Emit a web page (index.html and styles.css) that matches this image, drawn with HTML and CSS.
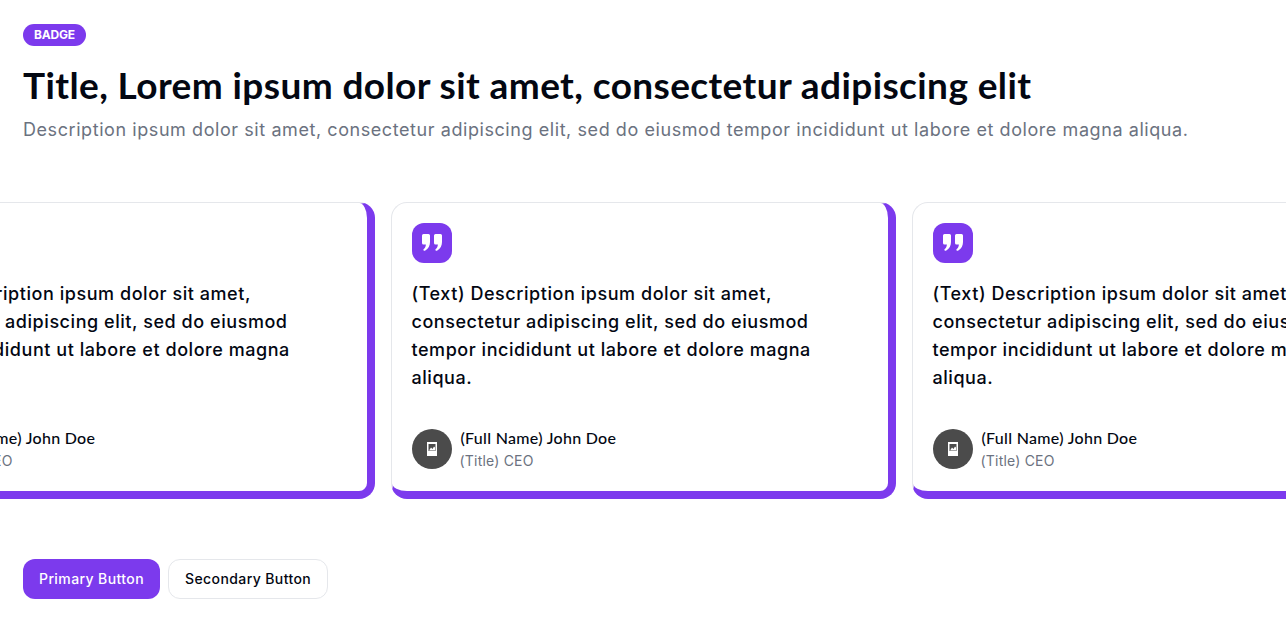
FILE: index.html
```html
<!DOCTYPE html>
<html lang="en">
<head>
  <meta charset="UTF-8" />
  <meta name="viewport" content="width=device-width, initial-scale=1.0" />
  <title>Testimonials</title>
  <link rel="stylesheet" href="styles.css">
</head>
<body>

  <div class="header">
    <span class="badge">BADGE</span>
    <h1 class="title">Title, Lorem ipsum dolor sit amet, consectetur adipiscing elit</h1>
    <p class="description">Description ipsum dolor sit amet, consectetur adipiscing elit, sed do eiusmod tempor incididunt ut labore et dolore magna aliqua.</p>
  </div>

  <div class="cards">
    <div class="card">
      <div class="quote-icon">
        <svg width="20" height="18" viewBox="0 0 20 18"><path d="M1.500 0h5A1.500 1.500 0 0 1 8 1.500V8c0 3.500-1.500 6.800-5 8.700-.6.300-1.200.1-1.500-.4s-.1-1 .3-1.300C3 14 3.700 12.500 3.900 10.500H1.500A1.500 1.500 0 0 1 0 9V1.500A1.500 1.500 0 0 1 1.500 0z" fill="#fff"/><path d="M1.500 0h5A1.500 1.500 0 0 1 8 1.500V8c0 3.500-1.500 6.800-5 8.700-.6.300-1.200.1-1.500-.4s-.1-1 .3-1.300C3 14 3.700 12.500 3.900 10.500H1.500A1.500 1.500 0 0 1 0 9V1.500A1.500 1.500 0 0 1 1.500 0z" transform="translate(12 0)" fill="#fff"/></svg>
      </div>
      <p class="card-text">(Text) Description ipsum dolor sit amet, consectetur adipiscing elit, sed do eiusmod tempor incididunt ut labore et dolore magna aliqua.</p>
      <div class="person">
        <div class="avatar">
          <svg width="10" height="14" viewBox="0 0 10 14"><path d="M0 0h10v14H0z" fill="#fff"/><path d="M1.500 2h7v7h-7z" fill="#4b4b4b"/><path d="M2 8.500l2-3 1.500 1.500L7 4.500l1 1v3z" fill="#fff"/></svg>
        </div>
        <div>
          <div class="person-name">(Full Name) John Doe</div>
          <div class="person-title">(Title) CEO</div>
        </div>
      </div>
    </div>

    <div class="card">
      <div class="quote-icon">
        <svg width="20" height="18" viewBox="0 0 20 18"><path d="M1.500 0h5A1.500 1.500 0 0 1 8 1.500V8c0 3.500-1.500 6.800-5 8.700-.6.300-1.200.1-1.500-.4s-.1-1 .3-1.300C3 14 3.700 12.500 3.900 10.500H1.500A1.500 1.500 0 0 1 0 9V1.500A1.500 1.500 0 0 1 1.500 0z" fill="#fff"/><path d="M1.500 0h5A1.500 1.500 0 0 1 8 1.500V8c0 3.500-1.500 6.800-5 8.700-.6.300-1.200.1-1.500-.4s-.1-1 .3-1.300C3 14 3.700 12.500 3.900 10.500H1.500A1.500 1.500 0 0 1 0 9V1.500A1.500 1.500 0 0 1 1.500 0z" transform="translate(12 0)" fill="#fff"/></svg>
      </div>
      <p class="card-text">(Text) Description ipsum dolor sit amet, consectetur adipiscing elit, sed do eiusmod tempor incididunt ut labore et dolore magna aliqua.</p>
      <div class="person">
        <div class="avatar">
          <svg width="10" height="14" viewBox="0 0 10 14"><path d="M0 0h10v14H0z" fill="#fff"/><path d="M1.500 2h7v7h-7z" fill="#4b4b4b"/><path d="M2 8.500l2-3 1.500 1.500L7 4.500l1 1v3z" fill="#fff"/></svg>
        </div>
        <div>
          <div class="person-name">(Full Name) John Doe</div>
          <div class="person-title">(Title) CEO</div>
        </div>
      </div>
    </div>

    <div class="card">
      <div class="quote-icon">
        <svg width="20" height="18" viewBox="0 0 20 18"><path d="M1.500 0h5A1.500 1.500 0 0 1 8 1.500V8c0 3.500-1.500 6.800-5 8.700-.6.300-1.200.1-1.500-.4s-.1-1 .3-1.300C3 14 3.700 12.500 3.900 10.500H1.500A1.500 1.500 0 0 1 0 9V1.500A1.500 1.500 0 0 1 1.500 0z" fill="#fff"/><path d="M1.500 0h5A1.500 1.500 0 0 1 8 1.500V8c0 3.500-1.500 6.800-5 8.700-.6.300-1.200.1-1.500-.4s-.1-1 .3-1.300C3 14 3.700 12.500 3.900 10.500H1.500A1.500 1.500 0 0 1 0 9V1.500A1.500 1.500 0 0 1 1.500 0z" transform="translate(12 0)" fill="#fff"/></svg>
      </div>
      <p class="card-text">(Text) Description ipsum dolor sit amet, consectetur adipiscing elit, sed do eiusmod tempor incididunt ut labore et dolore magna aliqua.</p>
      <div class="person">
        <div class="avatar">
          <svg width="10" height="14" viewBox="0 0 10 14"><path d="M0 0h10v14H0z" fill="#fff"/><path d="M1.500 2h7v7h-7z" fill="#4b4b4b"/><path d="M2 8.500l2-3 1.500 1.500L7 4.500l1 1v3z" fill="#fff"/></svg>
        </div>
        <div>
          <div class="person-name">(Full Name) John Doe</div>
          <div class="person-title">(Title) CEO</div>
        </div>
      </div>
    </div>
  </div>

  <div class="actions">
    <button class="btn btn-primary">Primary Button</button>
    <button class="btn btn-secondary">Secondary Button</button>
  </div>

</body>
</html>
```

FILE: styles.css
```css
body {
  margin: 0;
  background: #fff;
  font-family: "Inter", "Open Sans", sans-serif;
  color: #030712;
  overflow: hidden;
}

.header {
  padding: 24px 23px 0;
}

.badge {
  display: inline-block;
  height: 22px;
  line-height: 22px;
  padding: 0 11px;
  border-radius: 11px;
  background: #7c3aed;
  color: #fff;
  font-size: 12px;
  font-weight: 700;
  letter-spacing: -0.2px;
  vertical-align: top;
}

.title {
  margin: 17px 0 0;
  font-family: "Lato", sans-serif;
  font-size: 37px;
  line-height: 44px;
  font-weight: 700;
  letter-spacing: 0.4px;
}

.description {
  margin: 9px 0 0;
  font-size: 18px;
  line-height: 28px;
  letter-spacing: 0.57px;
  color: #6b7280;
}

.cards {
  display: flex;
  justify-content: center;
  gap: 16px;
  margin-top: 58px;
  overflow: hidden;
}

.card {
  flex: 0 0 505px;
  box-sizing: border-box;
  height: 297px;
  padding: 20px;
  border: 1px solid #e5e7eb;
  border-right: 8px solid #7c3aed;
  border-bottom: 8px solid #7c3aed;
  border-radius: 16px;
}

.quote-icon {
  display: flex;
  align-items: center;
  justify-content: center;
  width: 40px;
  height: 40px;
  border-radius: 12px;
  background: #7c3aed;
}

.card-text {
  margin: 17px 0 0;
  font-size: 18px;
  line-height: 28px;
  font-weight: 500;
  letter-spacing: 0.55px;
  color: #030712;
}

.person {
  display: flex;
  align-items: center;
  gap: 8px;
  margin-top: 34px;
}

.avatar {
  display: flex;
  align-items: center;
  justify-content: center;
  width: 40px;
  height: 40px;
  border-radius: 50%;
  background: #4b4b4b;
}

.person-name {
  padding-left: 1px;
  font-family: "Lato", sans-serif;
  font-size: 16px;
  line-height: 23px;
  font-weight: 500;
  letter-spacing: 0.3px;
}

.person-title {
  font-size: 14px;
  line-height: 23px;
  letter-spacing: 0.2px;
  color: #6b7280;
}

.actions {
  display: flex;
  gap: 8px;
  margin: 60px 0 0 23px;
}

.btn {
  height: 40px;
  padding: 0 16px 1px;
  border-radius: 12px;
  font-family: "Inter", sans-serif;
  font-size: 14px;
  font-weight: 500;
  letter-spacing: 0.4px;
}

.btn-primary {
  background: #7c3aed;
  border: none;
  color: #fff;
}

.btn-secondary {
  background: #fff;
  border: 1px solid #e5e7eb;
  color: #030712;
}
```
